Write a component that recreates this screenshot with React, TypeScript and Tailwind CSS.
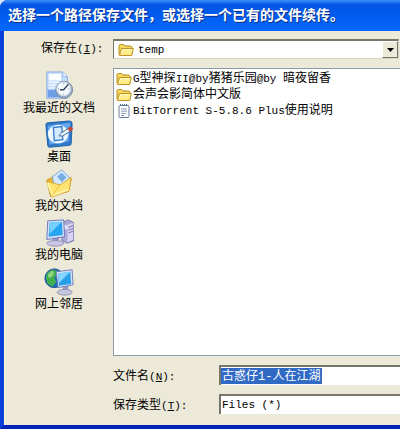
import type { ReactNode } from "react";

const places = [
  { name: "我最近的文档", icon: <RecentIcon /> },
  { name: "桌面", icon: <DesktopIcon /> },
  { name: "我的文档", icon: <DocumentsIcon /> },
  { name: "我的电脑", icon: <ComputerIcon /> },
  { name: "网上邻居", icon: <NetworkIcon /> },
];

const files = [
  { name: "G型神探II@by猪猪乐园@by 暗夜留香", folder: true },
  { name: "会声会影简体中文版", folder: true },
  { name: "BitTorrent S-5.8.6 Plus使用说明", folder: false },
];

function FolderIcon() {
  return (
    <svg viewBox="0 0 16 16" className="h-4 w-4 shrink-0">
      <path d="M1 12.5V4Q1 2.5 2.5 2.5h3L7 4h5.5Q14 4 14 5.5v7z" fill="#f5d95f" stroke="#b68b1d" />
      <path d="M1.5 13.5 3.5 6.5h11.8l-1.5 7z" fill="#ffec85" stroke="#c09428" strokeLinejoin="round" />
      <path d="M3.5 12 4.6 7.8h9" fill="none" stroke="#fffbd5" />
    </svg>
  );
}

function TextFileIcon() {
  return (
    <svg viewBox="0 0 16 16" className="h-4 w-4 shrink-0">
      <rect x="3" y="2.5" width="10" height="12" rx="1" fill="#fff" stroke="#68789a" />
      <path d="M4 2h8" stroke="#56739d" strokeDasharray="1 1" strokeWidth="2" />
      <path d="M5 6h6M5 8.2h6M5 10.4h5M5 12.5h3" stroke="#6582a8" strokeWidth=".8" />
    </svg>
  );
}

function RecentIcon() {
  return (
    <svg viewBox="0 0 32 32" className="h-[30px] w-[30px]">
      <path d="M3 1h17l5 5v23H3z" fill="#c7dcfa" stroke="#86aadf" />
      <path d="M5 3h13v7H5z" fill="#fafdff" />
      <path d="M5 12h12M5 15h10M5 18h9" stroke="#eff7ff" strokeWidth="1.5" />
      <path d="M4 20h12v8H4z" fill="#6f9ee9" />
      <path d="M20 1v5h5" fill="#edf6ff" stroke="#8eb1df" />
      <circle cx="21.5" cy="20" r="9" fill="#9caec5" stroke="#73869f" />
      <circle cx="21" cy="19" r="7.3" fill="#f4f9ff" stroke="#d1deec" />
      <path d="m26 14-5 6h-4" fill="none" stroke="#38465e" strokeWidth="1.6" />
      <path d="M21 13v1M21 24v1M26 19h1M15 19h1" stroke="#6c7e98" />
    </svg>
  );
}

function DesktopIcon() {
  return (
    <svg viewBox="0 0 32 32" className="h-[30px] w-[30px]">
      <path d="M2 5Q2 3 4 3l23-2q3 0 3 3l-1 21q0 2-2 2L6 29q-2 0-2-2z" fill="#347acb" stroke="#1760a8" />
      <path d="M4 6 28 3l-2 20-20 3z" fill="#62a9ed" />
      <ellipse cx="15" cy="15" rx="11" ry="10" fill="#eef7ff" />
      <path d="m10 8 9-1 1 14-9 1z" fill="#d6eaff" stroke="#3780cf" strokeWidth="1.5" />
      <path d="m16 17 2-3 8-5 2 3-8 5z" fill="#edf4fa" stroke="#416799" />
      <path d="m25 9 3-2 3 2-3 4z" fill="#c54833" />
    </svg>
  );
}

function DocumentsIcon() {
  return (
    <svg viewBox="0 0 32 32" className="h-[30px] w-[30px]">
      <path d="M3 12 14 6l15 5-3 13-19 5z" fill="#e9b830" stroke="#c6921f" />
      <path d="M9 8 19 1l9 9-8 10-9-1z" fill="#d5eaff" stroke="#76a5d5" />
      <path d="m14 8 5-4 5 5-5 5z" fill="#76ade3" />
      <path d="m3 13 14 4 12-8-2 14-19 7z" fill="#ffe472" stroke="#d6a32c" strokeLinejoin="round" />
      <path d="m4 15 5 13 17-6" fill="none" stroke="#fff5a6" strokeWidth="2" />
      <path d="m17 17-8 11" stroke="#eabc43" />
    </svg>
  );
}

function ComputerIcon() {
  return (
    <svg viewBox="0 0 32 32" className="h-[30px] w-[30px]">
      <path d="m19 5 7-3 6 3v19l-7 3-6-3z" fill="#aaa8d8" stroke="#7877ae" />
      <path d="m25 7 6-2v18l-6 3z" fill="#d5d3f1" />
      <path d="m26 10 5-2m-5 5 5-2m-5 5 5-2" stroke="#7471ad" />
      <path d="m20 7 5 1v4l-5-1z" fill="#e8e7fa" />
      <path d="m9 21 7-1v6H9z" fill="#9694c5" />
      <ellipse cx="12" cy="27" rx="9" ry="3" fill="#c7c6e4" stroke="#8e8db9" />
      <path d="m4 3 17-1 1 18-19 3z" fill="#d8def8" stroke="#6878ba" />
      <path d="m6 5 13-1 1 14-15 2z" fill="#25a4f0" />
      <path d="m6 5 13-1-13 13z" fill="#73d0ff" />
    </svg>
  );
}

function NetworkIcon() {
  return (
    <svg viewBox="0 0 32 32" className="h-[30px] w-[30px]">
      <circle cx="11" cy="12" r="10" fill="#2369b5" stroke="#1b5295" />
      <path d="M3 7 8 3l6 1 1 4-4 3 2 5-4 5-5-3-2-6z" fill="#3fad50" />
      <path d="M4 8 8 4l3 1-2 5-4 2z" fill="#8bd37d" />
      <path d="m20 21 6-1v6h-6z" fill="#9896bf" />
      <ellipse cx="22" cy="27" rx="8" ry="3" fill="#c5c6de" stroke="#9193b4" />
      <path d="m13 5 17-2 1 16-16 3z" fill="#dbe2f7" stroke="#687bb8" />
      <path d="m15 7 13-2 1 13-13 2z" fill="#299fe9" />
      <path d="m15 7 13-2-12 12z" fill="#83d6ff" />
    </svg>
  );
}

// Latin runs are set smaller so that two of them take about one Chinese character
function Mixed({ text }: { text: string }) {
  return (
    <>
      {text.split(/([\x20-\x7e]+)/).map((part, i) =>
        i % 2 ? <span key={i} className="text-[11px]">{part}</span> : part
      )}
    </>
  );
}

function FieldLabel({ id, hotkey, children, className }: { id: string; hotkey: string; children: ReactNode; className: string }) {
  return (
    <label htmlFor={id} className={`shrink-0 whitespace-pre ${className}`}>
      {children}
      <span className="text-[11px]">(<u>{hotkey}</u>):</span>
    </label>
  );
}

export default function App() {
  return (
    <main className="overflow-hidden bg-[#dce7f5] font-['Liberation_Mono','Noto_Sans_CJK_SC',monospace] text-xs text-black">
      <div className="rounded-tl-lg border-b-4 border-l-4 border-b-[#0022b8] border-l-[#0840e0] bg-[#0840e0]">
        <header className="-ml-1 rounded-tl-lg bg-linear-to-b from-[#3b91ff] from-0% via-[#0054e3] via-15% to-[#0569ff] py-1 pl-2">
          <h1 className="h-[23px] whitespace-nowrap pt-px text-sm font-bold leading-[23px] text-white text-shadow-[1px_1px_0_#0a2f8c]">
            选择一个路径保存文件，或选择一个已有的文件续传。
          </h1>
        </header>

        <div className="border-l border-[#fff5c8] bg-[#ece9d8] pb-[7px] pt-2">
          <div className="flex">
            <FieldLabel id="folder" hotkey="I" className="w-[108px] pl-9 leading-5">保存在</FieldLabel>
            <div className="mr-px flex h-5 min-w-0 flex-1 items-center border border-t-2 border-[#d8d4c4] border-l-[#77766b] border-t-[#77766b] bg-white pl-1">
              <FolderIcon />
              <select id="folder" className="min-w-0 flex-1 appearance-none pl-1 text-[11px] leading-4 outline-none">
                <option>temp</option>
              </select>
              <button type="button" aria-label="展开" className="flex h-full w-4 items-center justify-center border border-b-[#77766b] border-l-white border-r-[#77766b] border-t-white bg-[#ece9d8]">
                <svg viewBox="0 0 7 4" className="h-1 w-[7px]"><path d="M0 0h7L3.5 4z" /></svg>
              </button>
            </div>
          </div>

          <div className="mt-[9px] flex">
            <nav className="flex w-[108px] shrink-0 flex-col items-center pt-[3px]">
              {places.map((place) => (
                <button key={place.name} type="button" className="flex h-[49px] flex-col items-center leading-4">
                  {place.icon}
                  <span>{place.name}</span>
                </button>
              ))}
            </nav>

            <div className="min-w-0 flex-1">
              <ul className="min-h-[288px] border border-r-0 border-[#8b9bab] bg-white pl-0.5 pt-0.5">
                {files.map((file) => (
                  <li key={file.name} className="flex h-4 items-center whitespace-nowrap leading-4">
                    {file.folder ? <FolderIcon /> : <TextFileIcon />}
                    <span className="pl-px"><Mixed text={file.name} /></span>
                  </li>
                ))}
              </ul>

              <div className="mt-[9px] flex">
                <FieldLabel id="filename" hotkey="N" className="w-[106px] leading-6">文件名</FieldLabel>
                <div className="flex h-5 min-w-0 flex-1 items-center border-l-2 border-t-2 border-[#77766b] bg-white">
                  <input id="filename" defaultValue="古惑仔1-人在江湖" className="h-4 w-[101px] bg-[#316ac5] pl-px pt-0.5 leading-4 text-white outline-none" />
                </div>
              </div>

              <div className="mt-[5px] flex">
                <FieldLabel id="filetype" hotkey="T" className="w-[106px] leading-6">保存类型</FieldLabel>
                <select id="filetype" className="h-5 min-w-0 flex-1 appearance-none border-l-2 border-t-2 border-[#77766b] bg-white pl-px text-[11px] outline-none">
                  <option>Files (*)</option>
                </select>
              </div>
            </div>
          </div>
        </div>
      </div>
    </main>
  );
}
